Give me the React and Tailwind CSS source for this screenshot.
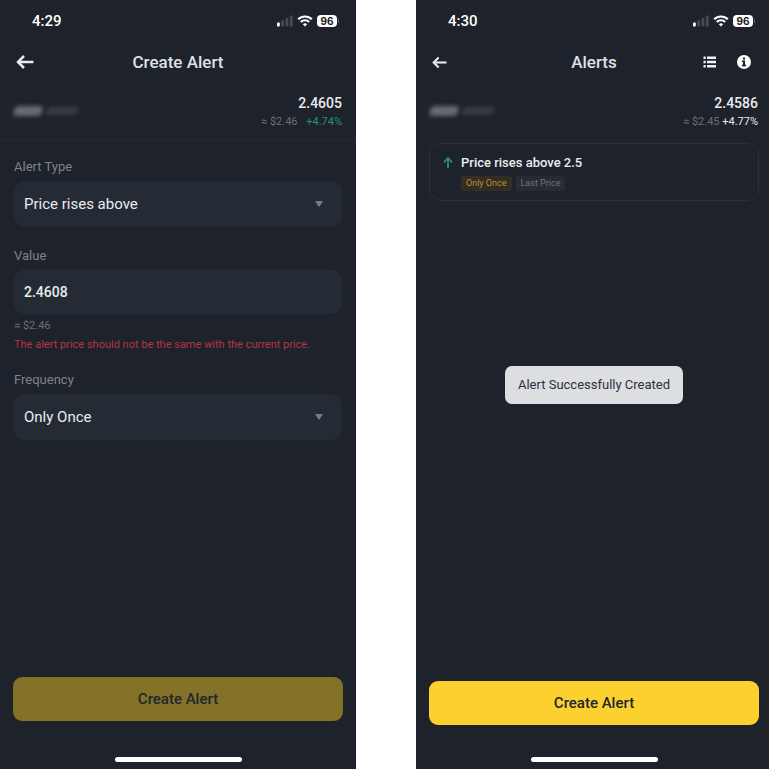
import { useState } from "react";

/* ---------- Icons ---------- */

function SignalIcon() {
  return (
    <svg width="16" height="12" viewBox="0 0 16 12" aria-hidden="true">
      <rect x="0" y="7.5" width="2.8" height="4" rx="0.8" fill="#fff" />
      <rect x="4.3" y="5.5" width="2.8" height="6" rx="0.8" fill="#464a51" />
      <rect x="8.6" y="3" width="2.8" height="8.5" rx="0.8" fill="#464a51" />
      <rect x="12.9" y="0.5" width="2.8" height="11" rx="0.8" fill="#464a51" />
    </svg>
  );
}

function WifiIcon() {
  return (
    <svg width="16" height="12" viewBox="0 0 16 12" fill="none" stroke="#fff" aria-hidden="true">
      <path d="M1.2 4.3a9.6 9.6 0 0 1 13.6 0" strokeWidth="2.2" />
      <path d="M3.8 7a6 6 0 0 1 8.4 0" strokeWidth="2" />
      <path d="M8 11.6 5.8 9.2a3.2 3.2 0 0 1 4.4 0Z" fill="#fff" stroke="none" />
    </svg>
  );
}

function BackIcon({ size }) {
  return (
    <svg width={size} height={size} viewBox="0 0 18 18" fill="none" stroke="#eaecef" strokeWidth="2.5" aria-hidden="true">
      <path d="M17.4 9H2.4" />
      <path d="M8 3 2 9l6 6" />
    </svg>
  );
}

function ListIcon() {
  return (
    <svg width="14" height="12" viewBox="0 0 14 12" fill="#f1f2f4" aria-hidden="true">
      <path d="M0.5 0.5h2.2v2.4H0.5zM4 0.5h9v2.4H4zM0.5 4.8h2.2v2.4H0.5zM4 4.8h9v2.4H4zM0.5 9.1h2.2v2.4H0.5zM4 9.1h9v2.4H4z" />
    </svg>
  );
}

function InfoIcon() {
  return (
    <svg width="14" height="14" viewBox="0 0 14 14" aria-hidden="true">
      <circle cx="7" cy="7" r="7" fill="#fff" />
      <path d="M5 5.5h3v4.3h1.1v1.4H4.9V9.8H6V6.9H5zM5.9 2.4H8v2.1H5.9z" fill="#1e222a" />
    </svg>
  );
}

function RiseIcon() {
  return (
    <svg width="10" height="12" viewBox="0 0 10 12" fill="none" stroke="#27946a" strokeWidth="1.8" aria-hidden="true">
      <path d="M5 11.2V1.4" />
      <path d="M0.9 5.3 5 1.2l4.1 4.1" />
    </svg>
  );
}

/* ---------- Shared pieces ---------- */

function StatusBar({ time }) {
  return (
    <div className="flex h-[42px] items-center justify-between pr-[17px] pl-8 text-white">
      <span className="text-[15px] leading-5 font-medium">{time}</span>
      <div className="flex items-center gap-1">
        <SignalIcon />
        <WifiIcon />
        <div className="flex items-center gap-px">
          <span className="flex h-3 w-5 items-center justify-center rounded-[4px] bg-white font-['Inter',sans-serif] text-[10px] leading-3 font-bold text-[#1e222a]">
            96
          </span>
          <span className="h-1 w-px rounded-r-full bg-[#6a6e75]" />
        </div>
      </div>
    </div>
  );
}

function Header({ title, backSize, children }) {
  return (
    <header className="grid h-10 grid-cols-[1fr_auto_1fr] items-center px-4">
      <button type="button" aria-label="Back" className="justify-self-start">
        <BackIcon size={backSize} />
      </button>
      <h1 className="text-[17px] leading-6 font-medium text-[#dfe1e5]">{title}</h1>
      <div className="flex items-center gap-5 justify-self-end pr-[5px]">{children}</div>
    </header>
  );
}

function PriceRow({ price, fiat, change, changeClass }) {
  return (
    <div className="flex items-center justify-between px-[14px] pt-[11px] pb-2">
      <div className="flex items-center gap-1 pb-[3px]" aria-hidden="true">
        <span className="h-[10px] w-7 -skew-x-12 rounded-sm bg-[#666b72] blur-[2px]" />
        <span className="h-2 w-8 -skew-x-12 rounded-sm bg-[#363c46] blur-[2px]" />
      </div>
      <div className="text-right">
        <p className="text-[14px] leading-5 font-medium text-[#eaecef]">{price}</p>
        <p className="text-[11px] leading-[18px] text-[#6a6f79]">
          {fiat} <span className={changeClass}>{change}</span>
        </p>
      </div>
    </div>
  );
}

function Select({ id, label, value, onChange, options }) {
  return (
    <div>
      <label htmlFor={id} className="block text-[13px] leading-5 text-[#7d828c]">
        {label}
      </label>
      <div className="relative mt-1">
        <select
          id={id}
          value={value}
          onChange={(e) => onChange(e.target.value)}
          className="h-[46px] w-full appearance-none rounded-[10px] bg-[#252b34] px-[10px] text-[15px] text-[#eaecef] outline-none"
        >
          {options.map((option) => (
            <option key={option}>{option}</option>
          ))}
        </select>
        <svg
          width="8"
          height="6"
          viewBox="0 0 8 6"
          className="pointer-events-none absolute top-5 right-[19px]"
          aria-hidden="true"
        >
          <path d="M0.6 0h6.8q.6 0 .3.6L4.6 5.3q-.6.7-1.2 0L.3.6Q0 0 .6 0z" fill="#777b83" />
        </svg>
      </div>
    </div>
  );
}

function Footer({ disabled, className }) {
  return (
    <footer className="flex flex-col px-[13px] pb-[7px]">
      <button
        type="button"
        disabled={disabled}
        className={`h-11 w-full rounded-[9px] text-[15px] font-medium text-[#202630] ${className}`}
      >
        Create Alert
      </button>
      <div className="mx-auto h-[5px] w-[127px] rounded-full bg-white" />
    </footer>
  );
}

/* ---------- Screens ---------- */

function CreateAlertScreen() {
  const [type, setType] = useState("Price rises above");
  const [value, setValue] = useState("2.4608");
  const [frequency, setFrequency] = useState("Only Once");

  return (
    <section className="flex flex-col bg-[#1e222a]">
      <StatusBar time="4:29" />
      <Header title="Create Alert" backSize={18} />
      <PriceRow price="2.4605" fiat="≈ $2.46" change="+4.74%" changeClass="ml-1.5 text-[#27946a]" />

      <form className="flex-1 border-t border-[#252a33] px-[14px] pt-[17px]">
        <Select
          id="alert-type"
          label="Alert Type"
          value={type}
          onChange={setType}
          options={["Price rises above", "Price drops to"]}
        />

        <div className="mt-[19px]">
          <label htmlFor="value" className="block text-[13px] leading-5 text-[#7d828c]">
            Value
          </label>
          <input
            id="value"
            inputMode="decimal"
            value={value}
            onChange={(e) => setValue(e.target.value)}
            className="mt-1 block h-11 w-full rounded-[10px] bg-[#252b34] px-[10px] text-[14px] font-medium text-[#eaecef] outline-none"
          />
          <p className="mt-1 text-[11px] leading-4 text-[#6a6f79]">≈ $2.46</p>
          <p className="mt-[3px] text-[11px] leading-4 text-[#b5344a]">
            The alert price should not be the same with the current price.
          </p>
        </div>

        <div className="mt-[17px]">
          <Select
            id="frequency"
            label="Frequency"
            value={frequency}
            onChange={setFrequency}
            options={["Only Once", "Once a Day", "Always"]}
          />
        </div>
      </form>

      <Footer disabled className="mb-9 bg-[#827127]" />
    </section>
  );
}

function AlertsScreen() {
  return (
    <section className="relative flex flex-col bg-[#1e222a]">
      <StatusBar time="4:30" />
      <Header title="Alerts" backSize={15}>
        <button type="button" aria-label="All alerts">
          <ListIcon />
        </button>
        <button type="button" aria-label="Info">
          <InfoIcon />
        </button>
      </Header>
      <PriceRow price="2.4586" fiat="≈ $2.45" change="+4.77%" changeClass="text-[#eaecef]" />

      <main className="flex-1 px-[13px] pt-1">
        <article className="flex gap-2 rounded-[12px] border border-[#2b3039] px-[13px] py-[9px]">
          <div className="flex h-5 items-center">
            <RiseIcon />
          </div>
          <div>
            <h2 className="text-[13px] leading-5 font-medium text-[#eaecef]">Price rises above 2.5</h2>
            <div className="mt-[3px] flex gap-1 text-[9px] leading-[15px]">
              <span className="rounded-[2px] bg-[#332d27] px-[5px] text-[#b8921f]">Only Once</span>
              <span className="rounded-[2px] bg-[#262b34] px-[5px] text-[#6f747e]">Last Price</span>
            </div>
          </div>
        </article>
      </main>

      <Footer className="mb-8 bg-[#fcd02f]" />

      {/* Toast */}
      <div className="pointer-events-none absolute inset-0 flex items-center justify-center">
        <p role="status" className="rounded-[7px] bg-[#dddee2] px-[13px] py-[9px] text-[13px] leading-5 text-[#2b313b]">
          Alert Successfully Created
        </p>
      </div>
    </section>
  );
}

export default function App() {
  return (
    <div className="overflow-hidden bg-white font-['Roboto',sans-serif]">
      <div className="grid min-h-screen w-[calc(100%+3px)] grid-cols-2 gap-[60px]">
        <CreateAlertScreen />
        <AlertsScreen />
      </div>
    </div>
  );
}
